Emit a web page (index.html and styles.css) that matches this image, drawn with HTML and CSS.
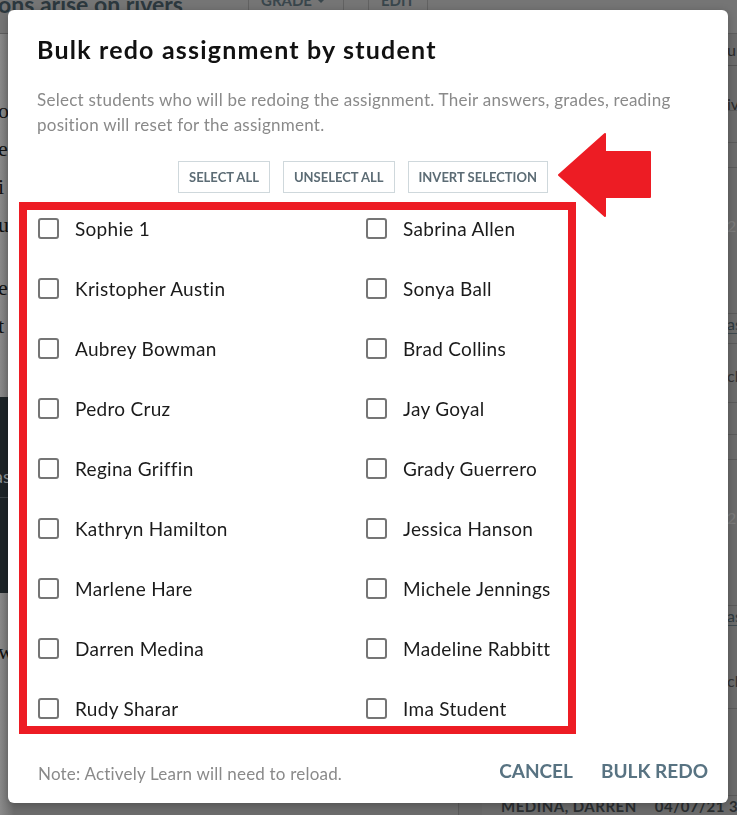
FILE: index.html
```html
<!DOCTYPE html>
<html lang="en">
<head>
  <meta charset="UTF-8">
  <meta name="viewport" content="width=device-width, initial-scale=1.0">
  <title>Bulk redo assignment by student</title>
  <link rel="stylesheet" href="styles.css">
</head>
<body>

  <!-- page behind the dialog (dimmed) -->
  <div class="page">
    <header class="topbar">
      <h1 class="lesson-title">ons arise on rivers</h1>
      <div class="tab tab-grade">GRADE <span class="caret"></span></div>
      <div class="tab-gap"></div>
      <div class="tab tab-edit">EDIT</div>
    </header>

    <div class="page-body">
      <div class="reader">
        <p class="reader-text">o<br>e<br>i<br>u</p>
        <p class="reader-text">e<br>t</p>
        <div class="media-block">
          <div class="media-caption">as</div>
        </div>
        <p class="reader-text reader-tail">w</p>
      </div>

      <div class="roster">
        <div class="r-row r-top">u</div>
        <div class="r-row r-name">iv</div>
        <div class="r-row r-thin"></div>
        <div class="r-row r-mid"></div>
        <div class="r-row r-big">2</div>
        <div class="r-row r-head">as</div>
        <div class="r-row r-space"></div>
        <div class="r-row r-btn">ck</div>
        <div class="r-row r-thin"></div>
        <div class="r-row r-mid"></div>
        <div class="r-row r-big">2</div>
        <div class="r-row r-head">as</div>
        <div class="r-row r-btn2">ck</div>
        <div class="r-row r-tail"></div>
        <div class="r-row r-student"><b>MEDINA, DARREN</b><b>04/07/21 3:10</b></div>
      </div>
    </div>
  </div>

  <div class="overlay">
    <div class="modal">
      <h2 class="modal-title">Bulk redo assignment by student</h2>
      <p class="modal-text">Select students who will be redoing the assignment. Their answers, grades, reading position will reset for the assignment.</p>

      <div class="select-actions">
        <button class="btn-outline" type="button">Select all</button>
        <button class="btn-outline" type="button">Unselect all</button>
        <button class="btn-outline" type="button">Invert selection</button>
      </div>

      <!-- red annotation arrow -->
      <svg class="callout-arrow" width="94" height="86" viewBox="0 0 94 86">
        <polygon points="1,43 47,2 47,20 92,20 92,65 47,65 47,84" fill="#ed1c24" stroke="#ed1c24" stroke-width="2" stroke-linejoin="round"/>
      </svg>

      <div class="student-list">
        <label class="student"><input type="checkbox"> Sophie 1</label>
        <label class="student"><input type="checkbox"> Sabrina Allen</label>
        <label class="student"><input type="checkbox"> Kristopher Austin</label>
        <label class="student"><input type="checkbox"> Sonya Ball</label>
        <label class="student"><input type="checkbox"> Aubrey Bowman</label>
        <label class="student"><input type="checkbox"> Brad Collins</label>
        <label class="student"><input type="checkbox"> Pedro Cruz</label>
        <label class="student"><input type="checkbox"> Jay Goyal</label>
        <label class="student"><input type="checkbox"> Regina Griffin</label>
        <label class="student"><input type="checkbox"> Grady Guerrero</label>
        <label class="student"><input type="checkbox"> Kathryn Hamilton</label>
        <label class="student"><input type="checkbox"> Jessica Hanson</label>
        <label class="student"><input type="checkbox"> Marlene Hare</label>
        <label class="student"><input type="checkbox"> Michele Jennings</label>
        <label class="student"><input type="checkbox"> Darren Medina</label>
        <label class="student"><input type="checkbox"> Madeline Rabbitt</label>
        <label class="student"><input type="checkbox"> Rudy Sharar</label>
        <label class="student"><input type="checkbox"> Ima Student</label>
      </div>

      <div class="modal-footer">
        <span class="note">Note: Actively Learn will need to reload.</span>
        <div class="footer-actions">
          <button class="btn-text" type="button">Cancel</button>
          <button class="btn-text" type="button">Bulk redo</button>
        </div>
      </div>
    </div>
  </div>

</body>
</html>
```

FILE: styles.css
```css
body {
  margin: 0;
  padding: 0;
  font-family: Lato, "Open Sans", sans-serif;
  background-color: #686868;
  overflow: hidden;
  height: 815px;
}

/* ---------- dimmed page behind ---------- */

.page {
  height: 815px;
  display: flex;
  flex-direction: column;
}

.topbar {
  display: flex;
  height: 33px;
  background-color: #757575;
  border-bottom: 1px solid #5e5e5e;
  flex-shrink: 0;
}

.lesson-title {
  margin: -9px 0 0 -2px;
  width: 250px;
  font-size: 23px;
  line-height: 26px;
  font-weight: 700;
  color: #2c383e;
  border-right: 1px solid #626262;
}

.tab {
  font-size: 15px;
  font-weight: 700;
  color: #39464c;
  line-height: 16px;
  margin-top: -8px;
  padding-left: 12px;
  border-right: 1px solid #626262;
}

.tab-grade {
  width: 82px;
}

.caret {
  display: inline-block;
  border-left: 5px solid transparent;
  border-right: 5px solid transparent;
  border-top: 5px solid #39464c;
  vertical-align: 3px;
}

.tab-gap {
  width: 24px;
  border-right: 1px solid #626262;
}

.tab-edit {
  width: 46px;
}

.page-body {
  flex: 1;
  display: flex;
}

.reader {
  width: 458px;
  background: linear-gradient(to right, #8a8a8a, #6c6c6c 14px);
  border-right: 1px solid #5a5a5a;
}

.reader-text {
  margin: 58px 0 0 -2px;
  font-family: "Liberation Serif", serif;
  font-size: 22px;
  line-height: 38px;
  color: #111;
}

.reader-text + .reader-text {
  margin-top: 25px;
}

.media-block {
  margin-top: 52px;
  height: 196px;
  background-color: #1d2427;
  padding-top: 68px;
  box-sizing: border-box;
}

.media-caption {
  color: #8b9194;
  font-size: 18px;
  text-indent: -6px;
  height: 32px;
  border-bottom: 1px solid #3b4246;
}

.reader-tail {
  margin-top: 40px;
}

.roster {
  flex: 1;
  min-width: 0;
  margin-left: 23px;
  background-color: #6b6b6b;
}

.r-row {
  border-bottom: 1px solid #5b5b5b;
  padding-left: 245px;
  color: #2a2a2a;
  font-size: 16px;
  box-sizing: border-box;
}

.r-top { border-bottom-color: #555; height: 32px; padding-top: 6px; }
.r-name { height: 45px; padding-top: 28px; }
.r-thin { height: 32px; }
.r-mid { height: 25px; }
.r-big { height: 146px; padding-top: 48px; color: #7c7c7c; }
.r-head { height: 20px; color: #2f3b40; border-bottom-color: #3f4a50; }
.r-space { height: 10px; }
.r-btn { height: 59px; padding-top: 22px; color: #333; }
.r-btn2 { height: 83px; padding-top: 45px; color: #333; }
.r-tail { height: 87px; }

.r-student {
  border: none;
  padding: 1px 0 0 19px;
  display: flex;
  gap: 18px;
  white-space: nowrap;
  font-size: 15px;
  letter-spacing: 0.5px;
  color: #2a2e30;
}

/* ---------- dialog ---------- */

.overlay {
  position: fixed;
  top: 0;
  left: 0;
  right: 0;
  bottom: 0;
  display: flex;
  padding: 10px 9px 12px 8px;
  box-sizing: border-box;
}

.modal {
  position: relative;
  flex: 1;
  display: flex;
  flex-direction: column;
  background-color: #fff;
  border-radius: 6px;
  padding: 24px 29px 9px;
  box-shadow: 0 2px 8px rgba(0, 0, 0, 0.25);
}

.modal-title {
  margin: 0;
  font-size: 25px;
  line-height: 30px;
  font-weight: 700;
  letter-spacing: 1.2px;
  color: #111;
}

.modal-text {
  margin: 23px 0 0;
  font-size: 17px;
  line-height: 25px;
  letter-spacing: 0.25px;
  color: #8a8a8a;
}

.select-actions {
  display: flex;
  justify-content: center;
  gap: 13px;
  margin-top: 24px;
  padding-right: 10px;
}

.btn-outline {
  height: 32px;
  padding: 0 10px;
  background: #fff;
  border: 1px solid #cfd8dc;
  border-radius: 0;
  color: #5c6c75;
  font-family: inherit;
  font-size: 13px;
  font-weight: 700;
  text-transform: uppercase;
  cursor: pointer;
}

.callout-arrow {
  position: absolute;
  left: 550px;
  top: 122px;
}

.student-list {
  display: grid;
  grid-template-columns: 328px 1fr;
  grid-auto-rows: 36px;
  row-gap: 24px;
  margin: 9px -18px 0;
  width: 530px;
  padding-left: 11px;
  border: 8px solid #ed1c24;
}

.student {
  display: flex;
  align-items: center;
  gap: 16px;
  font-size: 19px;
  letter-spacing: 0.3px;
  color: #1b1b1b;
}

.student input {
  appearance: none;
  margin: 0;
  width: 21px;
  height: 21px;
  border: 2px solid #757575;
  border-radius: 3px;
}

.modal-footer {
  margin-top: auto;
  height: 48px;
  display: flex;
  align-items: center;
  justify-content: space-between;
  margin-right: -9px;
}

.note {
  padding-left: 1px;
  padding-top: 6px;
  font-size: 17px;
  letter-spacing: 0.2px;
  color: #8a8a8a;
}

.footer-actions {
  display: flex;
  gap: 28px;
}

.btn-text {
  padding: 0;
  background: none;
  border: none;
  color: #587382;
  font-family: inherit;
  font-size: 19px;
  font-weight: 700;
  text-transform: uppercase;
  cursor: pointer;
}
```
